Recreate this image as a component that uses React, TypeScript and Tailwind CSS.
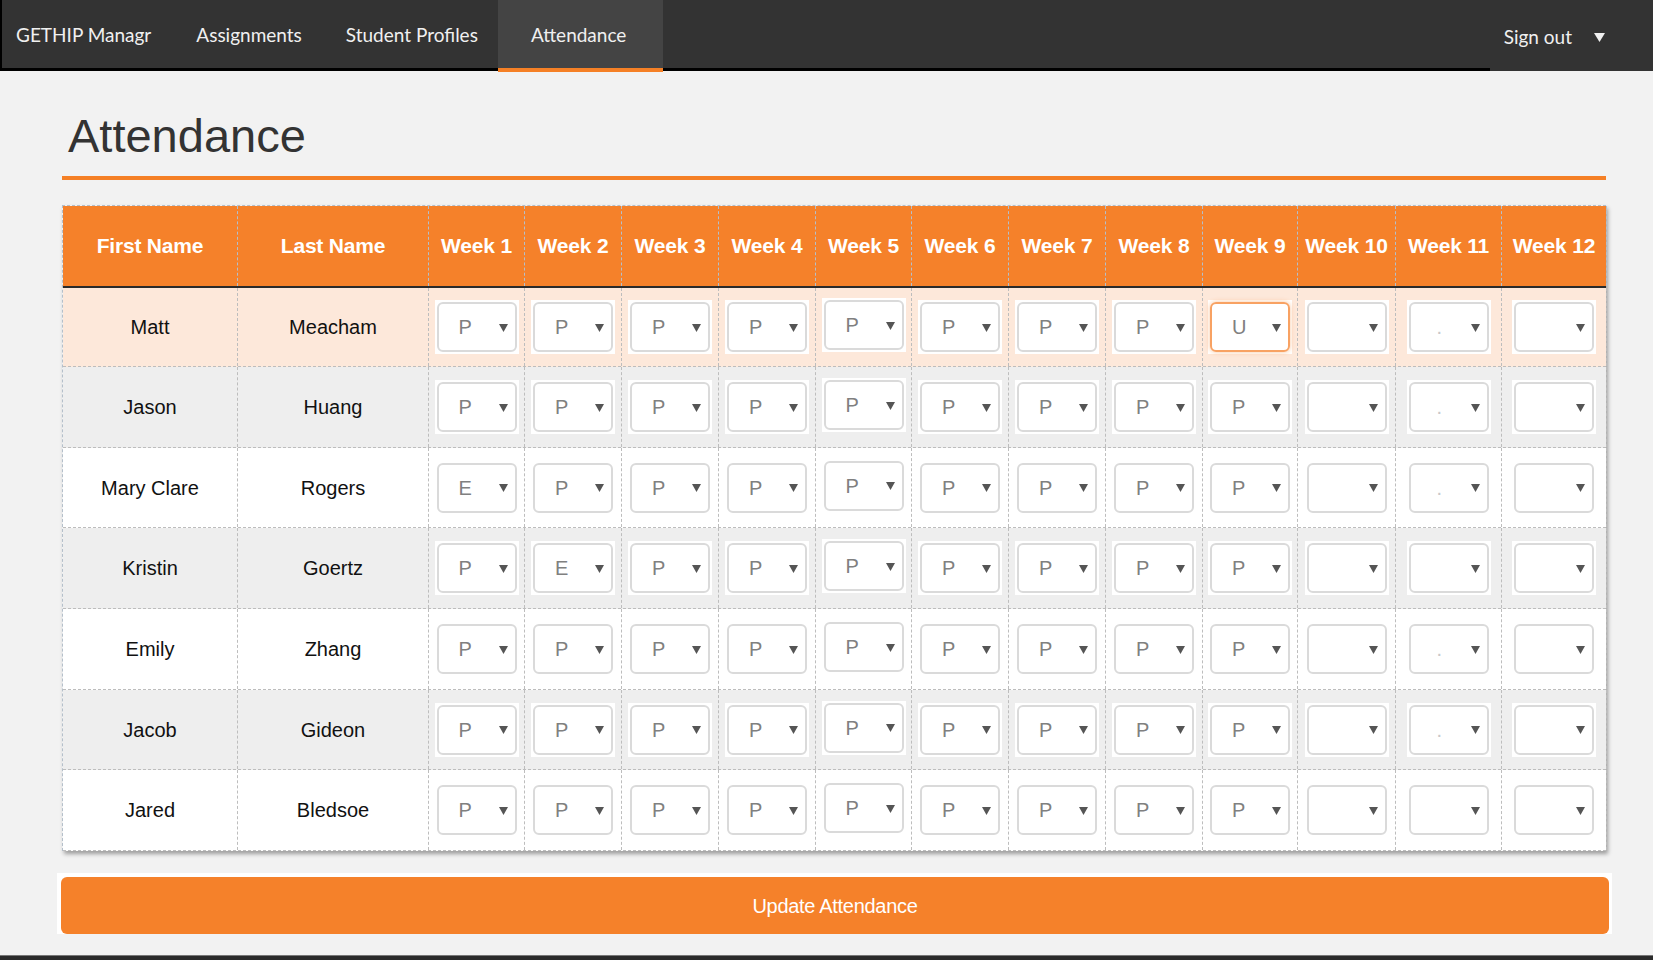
const cols =
  "grid grid-cols-[175px_191px_96px_97px_97px_97px_96px_97px_97px_97px_95px_98px_106px_105px]";

const weeks = ["Week 1", "Week 2", "Week 3", "Week 4", "Week 5", "Week 6", "Week 7", "Week 8", "Week 9", "Week 10", "Week 11", "Week 12"];

const P9 = ["P", "P", "P", "P", "P", "P", "P", "P", "P", "", "", ""];

const students = [
  { first: "Matt", last: "Meacham", marks: ["P", "P", "P", "P", "P", "P", "P", "P", "U", "", ".", ""], bg: "bg-[#fde8da]", h: "h-[79px]" },
  { first: "Jason", last: "Huang", marks: [...P9.slice(0, 10), ".", ""], bg: "bg-[#eeeeee]", h: "h-[81px]" },
  { first: "Mary Clare", last: "Rogers", marks: ["E", "P", "P", "P", "P", "P", "P", "P", "P", "", ".", ""], bg: "bg-white", h: "h-[80px]" },
  { first: "Kristin", last: "Goertz", marks: ["P", "E", "P", "P", "P", "P", "P", "P", "P", "", "", ""], bg: "bg-[#eeeeee]", h: "h-[81px]" },
  { first: "Emily", last: "Zhang", marks: [...P9.slice(0, 10), ".", ""], bg: "bg-white", h: "h-[81px]" },
  { first: "Jacob", last: "Gideon", marks: [...P9.slice(0, 10), ".", ""], bg: "bg-[#eeeeee]", h: "h-[80px]" },
  { first: "Jared", last: "Bledsoe", marks: P9, bg: "bg-white", h: "h-[81px]" },
];

function Pick({ v, focus, lift }: { v: string; focus?: boolean; lift?: boolean }) {
  const dot = v === ".";
  return (
    <div className={`bg-white p-[2px] ${lift ? "-translate-y-[2px]" : ""}`}>
      <div
        className={`w-[80px] h-[50px] rounded-[6px] border-2 flex items-center ${
          focus ? "border-[#f8a263] shadow-[0_0_5px_rgba(245,128,38,0.45)]" : "border-[#dadada]"
        }`}
      >
        <span className={`flex-1 pl-[20px] text-[20px] ${dot ? "text-[#c8c8c8] text-[12px] pl-[26px]" : "text-[#808080]"}`}>
          {v}
        </span>
        <svg className="mr-[7px]" width="9" height="9" viewBox="0 0 9 9">
          <path d="M0 1h9L4.5 9z" fill="#555" />
        </svg>
      </div>
    </div>
  );
}

export default function App() {
  return (
    <div className="h-[960px] bg-[#f2f2f2] flex flex-col font-['Liberation_Sans',Arial,sans-serif]">
      {/* Navbar */}
      <nav className="h-[71px] shrink-0 bg-[#333333] border-b-[3px] border-l-2 border-black flex items-stretch font-['Lato',sans-serif] text-[19px] text-[#f0f0f0]">
        <div className="flex items-center pt-[3px] pl-[14px] pr-[45px]">GETHIP Managr</div>
        <div className="flex items-center pt-[3px] pr-[44px]">Assignments</div>
        <div className="flex items-center pt-[3px] pr-[20px]">Student Profiles</div>
        <div className="flex items-center pt-[3px] pl-[33px] pr-[37px] bg-[#444444] border-b-4 border-[#f58026] -mb-[4px]">Attendance</div>
        <div className="flex-1" />
        <div className="flex items-center pt-[3px] pl-[14px] pr-[48px] bg-[#333333] -mb-[3px] gap-[22px]">
          Sign out
          <svg width="11" height="10" viewBox="0 0 11 10">
            <path d="M0 1h11L5.5 10z" fill="#f0f0f0" />
          </svg>
        </div>
      </nav>

      {/* Content */}
      <main className="flex-1 ml-[62px] w-[1544px]">
        <h1 className="mt-[40px] pl-[6px] text-[47px] leading-[50px] text-[#333333]">Attendance</h1>
        <div className="mt-[15px] h-[4px] bg-[#f58026]" />

        <div className="mt-[25px] border-t border-l border-dashed border-[#b4bfca] shadow-[2px_3px_4px_rgba(0,0,0,0.35)]">
          <div className={`${cols} h-[82px] bg-[#f5812a] border-b-2 border-[#2a2a2a]`}>
            {["First Name", "Last Name", ...weeks].map((h) => (
              <div
                key={h}
                className="flex items-center justify-center border-r border-dashed border-[#b4bfca] text-white font-bold text-[21px] tracking-[-0.2px]"
              >
                {h}
              </div>
            ))}
          </div>
          {students.map((s) => (
            <div key={s.first} className={`${cols} ${s.h} ${s.bg} border-b border-dashed border-[#bdbdbd]`}>
              <div className="flex items-center justify-center border-r border-dashed border-[#bdbdbd] text-[20px] text-[#111]">
                {s.first}
              </div>
              <div className="flex items-center justify-center border-r border-dashed border-[#bdbdbd] text-[20px] text-[#111]">
                {s.last}
              </div>
              {s.marks.map((m, i) => (
                <div key={i} className="flex items-center justify-center border-r border-dashed border-[#bdbdbd]">
                  <Pick v={m} focus={m === "U"} lift={i === 4} />
                </div>
              ))}
            </div>
          ))}
        </div>

        <div className="mt-[22px] -ml-[5px] w-[1555px] bg-white pt-[4px] pl-[4px] pr-[3px]">
          <button className="w-full h-[57px] rounded-[6px] bg-[#f5812a] text-white text-[20px] tracking-[-0.3px]">
            Update Attendance
          </button>
        </div>
      </main>

      <div className="h-[5px] shrink-0 bg-[#2b2b2b] border-t border-[#777]" />
    </div>
  );
}
